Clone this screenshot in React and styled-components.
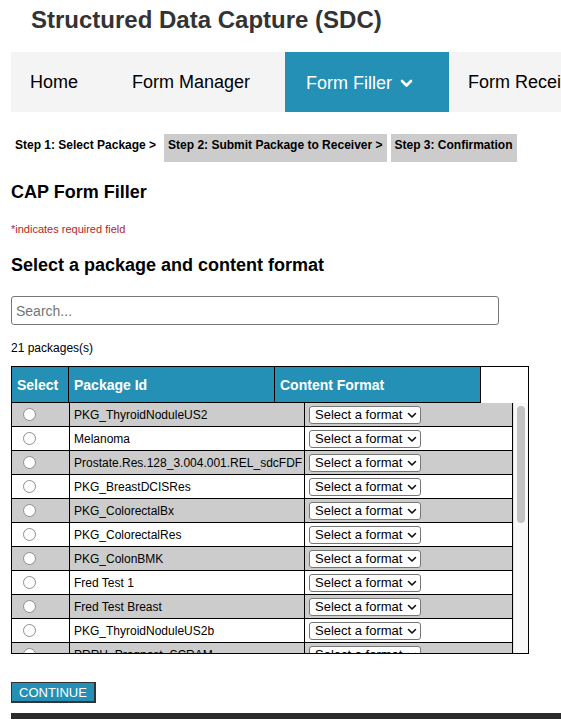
import styled, { createGlobalStyle } from "styled-components";

const BLUE = "#2490b5";

const GlobalStyle = createGlobalStyle`
  html, body {
    margin: 0;
    padding: 0;
    background: #fff;
    overflow: hidden;
  }
  body {
    font-family: "Liberation Sans", Arial, Helvetica, sans-serif;
    color: #000;
  }
`;

const Page = styled.div`
  height: 100vh;
  padding-left: 11px;
  box-sizing: border-box;
  display: flex;
  flex-direction: column;
  align-items: flex-start;
  overflow: hidden;
`;

const Title = styled.h1`
  margin: 6px 0 0 20px;
  font-size: 24px;
  line-height: 28px;
  font-weight: bold;
  color: #333;
`;

const Nav = styled.nav`
  margin-top: 18px;
  align-self: stretch;
  height: 60px;
  background: #f4f4f4;
  display: flex;
  overflow: hidden;
  white-space: nowrap;
`;

const NavItem = styled.a`
  flex-shrink: 0;
  display: flex;
  align-items: center;
  gap: 8px;
  padding: ${(p) => (p.$active ? "3px 36px 0 21px" : "0 35px 0 19px")};
  background: ${(p) => (p.$active ? BLUE : "transparent")};
  color: ${(p) => (p.$active ? "#fff" : "#000")};
  font-size: 18px;
  text-decoration: none;
`;

const Steps = styled.div`
  margin-top: 22px;
  display: flex;
  gap: 4px;
`;

const Step = styled.span`
  padding: 4px 4px 10px;
  font-size: 12px;
  line-height: 14px;
  font-weight: bold;
  background: ${(p) => (p.$pending ? "#cccccc" : "transparent")};
`;

const Heading = styled.h2`
  margin: ${(p) => p.$top}px 0 0;
  font-size: 18px;
  line-height: 22px;
  font-weight: bold;
`;

const Required = styled.p`
  margin: 19px 0 0;
  font-size: 11px;
  line-height: 14px;
  color: #b3261e;
`;

const SearchInput = styled.input`
  margin-top: 20px;
  width: 488px;
  height: 29px;
  box-sizing: border-box;
  border: 1px solid #767676;
  border-radius: 3px;
  padding: 0 4px;
  font-family: inherit;
  font-size: 14px;

  &::placeholder {
    color: #757575;
  }
`;

const Count = styled.div`
  margin-top: 16px;
  font-size: 12px;
  line-height: 14px;
`;

const Frame = styled.div`
  margin-top: 11px;
  width: 518px;
  box-sizing: border-box;
  border: 1px solid #000;
  background: #fff;
`;

const HeadTable = styled.table`
  width: 469px;
  border-collapse: separate;
  border-spacing: 0;
  table-layout: fixed;
`;

const HeadCell = styled.th`
  height: 36px;
  box-sizing: border-box;
  padding: 0 5px;
  background: ${BLUE};
  color: #fff;
  font-size: 14px;
  font-weight: bold;
  text-align: left;
  border-right: 1px solid #000;
  border-bottom: 1px solid #000;
`;

const BodyWrap = styled.div`
  display: flex;
  height: 250px;
`;

const Scroll = styled.div`
  width: 501px;
  height: 100%;
  overflow-y: auto;
  scrollbar-width: none;

  &::-webkit-scrollbar {
    display: none;
  }
`;

const Rail = styled.div`
  flex: 1;
  box-sizing: border-box;
  padding: 3px 3px 0 3px;
  background: #f8f8f8;
  border-left: 1px solid #e4e4e4;
`;

const Thumb = styled.div`
  height: 117px;
  border-radius: 4px;
  background: #c2c2c2;
`;

const BodyTable = styled.table`
  width: 501px;
  border-collapse: separate;
  border-spacing: 0;
  table-layout: fixed;
`;

const Row = styled.tr`
  background: ${(p) => (p.$shade ? "#cccccc" : "#fff")};
`;

const Cell = styled.td`
  height: 24px;
  box-sizing: border-box;
  padding: 0 4px;
  border-right: 1px solid #000;
  border-bottom: 1px solid #000;
  font-size: 12px;
  white-space: nowrap;
  overflow: hidden;
  vertical-align: middle;
`;

const Radio = styled.input.attrs({ type: "radio", name: "pkg" })`
  appearance: none;
  display: block;
  width: 13px;
  height: 13px;
  margin: 0 0 0 7px;
  box-sizing: border-box;
  border: 1px solid #8e8e8e;
  border-radius: 50%;
  background: #fff;
`;

const FormatBox = styled.span`
  position: relative;
  display: inline-block;
  vertical-align: middle;
`;

const FormatSelect = styled.select`
  appearance: none;
  display: block;
  width: 112px;
  height: 18px;
  box-sizing: border-box;
  border: 1px solid #767676;
  border-radius: 3px;
  background: #fff;
  color: #000;
  padding: 0 0 0 5px;
  font-family: inherit;
  font-size: 13px;
`;

const SelectArrow = styled.svg`
  position: absolute;
  right: 4px;
  top: 6px;
  pointer-events: none;
`;

const ContinueButton = styled.button`
  margin-top: 28px;
  height: 21px;
  box-sizing: border-box;
  padding: 0 7px;
  background: ${BLUE};
  color: #fff;
  border-style: solid;
  border-color: #333;
  border-width: 1px 2px 2px 1px;
  font-family: inherit;
  font-size: 13px;
  line-height: 1;
`;

const Footer = styled.footer`
  margin-top: 10px;
  flex: 1;
  align-self: stretch;
  background: #2b2b2b;
`;

const packages = [
  "PKG_ThyroidNoduleUS2",
  "Melanoma",
  "Prostate.Res.128_3.004.001.REL_sdcFDF",
  "PKG_BreastDCISRes",
  "PKG_ColorectalBx",
  "PKG_ColorectalRes",
  "PKG_ColonBMK",
  "Fred Test 1",
  "Fred Test Breast",
  "PKG_ThyroidNoduleUS2b",
  "PRRH_Prognost_SCRAM",
  "PKG_LungRes",
  "PKG_BreastInvasiveRes",
  "Adrenal.Bx.342_1.000.001.REL_sdcFDF",
  "PKG_KidneyRes",
  "PKG_ProstateBx",
  "Fred Test 2",
  "PKG_MelanomaBMK",
  "PKG_ThyroidFNA",
  "PKG_PancreasExoRes",
  "PKG_GastricRes",
];

function Chevron() {
  return (
    <svg width="13" height="9" viewBox="0 0 13 9">
      <polyline
        points="2,2 6.5,6.5 11,2"
        fill="none"
        stroke="#fff"
        strokeWidth="2.6"
        strokeLinecap="round"
        strokeLinejoin="round"
      />
    </svg>
  );
}

function FormatPicker() {
  return (
    <FormatBox>
      <FormatSelect defaultValue="">
        <option value="">Select a format</option>
        <option value="xml">XML</option>
        <option value="json">JSON</option>
      </FormatSelect>
      <SelectArrow width="10" height="7" viewBox="0 0 10 7">
        <polyline
          points="1.5,1.5 5,5 8.5,1.5"
          fill="none"
          stroke="#111"
          strokeWidth="1.6"
          strokeLinecap="round"
          strokeLinejoin="round"
        />
      </SelectArrow>
    </FormatBox>
  );
}

export default function App() {
  return (
    <>
      <GlobalStyle />
      <Page>
        <Title>Structured Data Capture (SDC)</Title>
        <Nav>
          <NavItem href="#">Home</NavItem>
          <NavItem href="#">Form Manager</NavItem>
          <NavItem href="#" $active>
            Form Filler <Chevron />
          </NavItem>
          <NavItem href="#">Form Receiver</NavItem>
          <NavItem href="#">Help</NavItem>
        </Nav>

        <Steps>
          <Step>Step 1: Select Package &gt;</Step>
          <Step $pending>Step 2: Submit Package to Receiver &gt;</Step>
          <Step $pending>Step 3: Confirmation</Step>
        </Steps>

        <Heading $top={19}>CAP Form Filler</Heading>
        <Required>*indicates required field</Required>
        <Heading $top={18}>Select a package and content format</Heading>

        <SearchInput placeholder="Search..." />
        <Count>21 packages(s)</Count>

        <Frame>
          <HeadTable>
            <colgroup>
              <col style={{ width: 57 }} />
              <col style={{ width: 206 }} />
              <col style={{ width: 206 }} />
            </colgroup>
            <thead>
              <tr>
                <HeadCell>Select</HeadCell>
                <HeadCell>Package Id</HeadCell>
                <HeadCell>Content Format</HeadCell>
              </tr>
            </thead>
          </HeadTable>
          <BodyWrap>
            <Scroll>
              <BodyTable>
                <colgroup>
                  <col style={{ width: 58 }} />
                  <col style={{ width: 235 }} />
                  <col style={{ width: 208 }} />
                </colgroup>
                <tbody>
                  {packages.map((name, i) => (
                    <Row key={name} $shade={i % 2 === 0}>
                      <Cell>
                        <Radio />
                      </Cell>
                      <Cell>{name}</Cell>
                      <Cell>
                        <FormatPicker />
                      </Cell>
                    </Row>
                  ))}
                </tbody>
              </BodyTable>
            </Scroll>
            <Rail>
              <Thumb />
            </Rail>
          </BodyWrap>
        </Frame>

        <ContinueButton>CONTINUE</ContinueButton>
        <Footer />
      </Page>
    </>
  );
}
